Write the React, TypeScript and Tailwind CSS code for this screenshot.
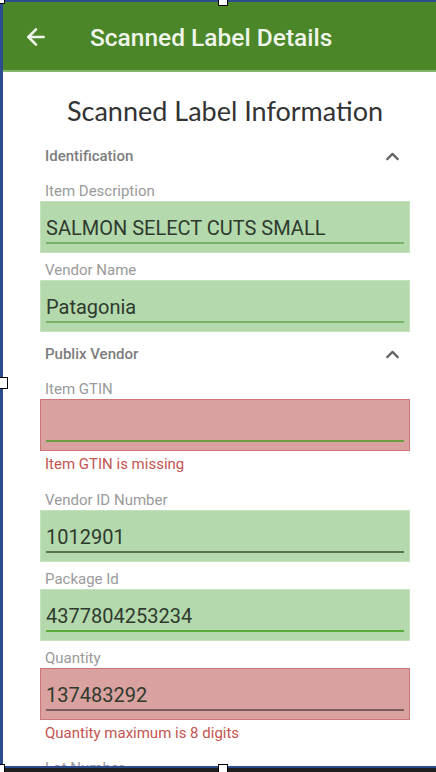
import { ChevronUp, ArrowLeft } from 'lucide-react';

type FieldProps = {
  label: string;
  value: string;
  error?: string;
  line: string;
  gap?: string;
};

function Field({ label, value, error, line, gap = 'mt-[7px]' }: FieldProps) {
  const invalid = !!error;
  return (
    <div className={`flex flex-col ${gap}`}>
      <div className="h-[20px] leading-[20px] text-[15px] text-[#9a9a9a] pl-[5px]">{label}</div>
      <div
        className={`h-[52px] border px-[5px] pt-[13px] ${
          invalid ? 'bg-[#d9a2a1] border-[#c97777]' : 'bg-[#b3d9ad] border-[#c3e2bd]'
        }`}
      >
        <div className="h-[26px] leading-[26px] text-[20px] text-[#2f3a2d]">{value}</div>
        <div className={`mt-[1px] h-[2px] ${line}`}></div>
      </div>
      {error && (
        <div className="mt-[3px] h-[20px] leading-[20px] text-[15px] text-[#c4544f] pl-[5px]">{error}</div>
      )}
    </div>
  );
}

function Section({ title, gap }: { title: string; gap: string }) {
  return (
    <div className={`flex items-center justify-between h-[20px] pl-[5px] pr-[7px] ${gap}`}>
      <span className="text-[15px] font-medium text-[#7d7d7d]">{title}</span>
      <ChevronUp size={21} strokeWidth={2.6} className="text-[#666]" />
    </div>
  );
}

function Handle({ className }: { className: string }) {
  return <div className={`absolute w-[10px] h-[10px] bg-white border border-black ${className}`}></div>;
}

export default function App() {
  return (
    <div
      className="relative w-[436px] h-[772px] overflow-hidden bg-[#1f1f1f]"
      style={{ fontFamily: 'Roboto, "Liberation Sans", sans-serif' }}
    >
      <div className="h-[768px] border-l-[3px] border-t-[2px] border-b-[2px] border-[#2d4b8f] bg-white overflow-hidden">
        <header className="h-[70px] bg-[#4b8628] border-b-[2px] border-[#86b86b] flex items-center">
          <ArrowLeft size={26} strokeWidth={2.4} className="text-[#eef5ea] ml-[20px] mt-[2px]" />
          <h1 className="ml-[41px] mt-[4px] text-[24.5px] font-medium text-[#eef5ea]">Scanned Label Details</h1>
        </header>

        <div className="flex flex-col pl-[37px] pr-[26px] pt-[23px]">
          <h2
            className="text-center h-[32px] leading-[32px] text-[27px] text-[#333]"
            style={{ fontFamily: 'Lato, "Liberation Sans", sans-serif' }}
          >
            Scanned Label Information
          </h2>

          <Section title="Identification" gap="mt-[19px]" />
          <Field label="Item Description" value="SALMON SELECT CUTS SMALL" line="bg-[#79b168]" gap="mt-[15px]" />
          <Field label="Vendor Name" value="Patagonia" line="bg-[#79b168]" />

          <Section title="Publix Vendor" gap="mt-[12px]" />
          <Field label="Item GTIN" value="" error="Item GTIN is missing" line="bg-[#6a9e45]" gap="mt-[15px]" />
          <Field label="Vendor ID Number" value="1012901" line="bg-[#5b7552]" gap="mt-[16px]" />
          <Field label="Package Id" value="4377804253234" line="bg-[#5aad3c]" />
          <Field label="Quantity" value="137483292" error="Quantity maximum is 8 digits" line="bg-[#7a5d5c]" />
          <div className="mt-[15px] h-[20px] leading-[20px] text-[15px] text-[#9a9a9a] pl-[5px]">Lot Number</div>
        </div>
      </div>

      <Handle className="-left-[5px] -top-[6px]" />
      <Handle className="left-[218px] -top-[4px]" />
      <Handle className="-left-[3px] top-[377px] w-[11px] h-[12px]" />
      <Handle className="-left-[5px] top-[764px]" />
      <Handle className="left-[218px] top-[764px]" />
    </div>
  );
}
